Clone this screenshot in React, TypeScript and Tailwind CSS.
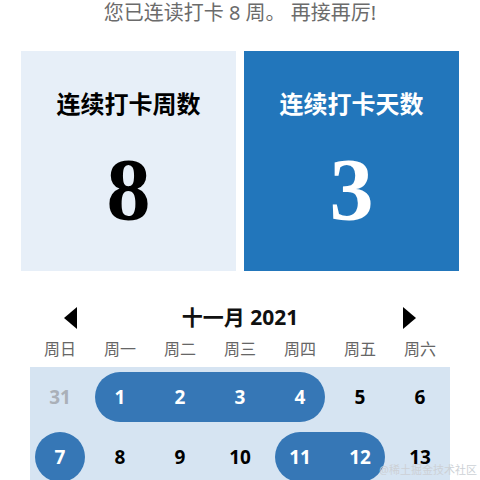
import React from 'react';

const weekNames = ['周日', '周一', '周二', '周三', '周四', '周五', '周六'];

// each row: list of day cells, with range markers for the pill background
type Cell = { d: number; muted?: boolean; start?: boolean; end?: boolean; inRange?: boolean };

const rows: Cell[][] = [
  [
    { d: 31, muted: true },
    { d: 1, inRange: true, start: true },
    { d: 2, inRange: true },
    { d: 3, inRange: true },
    { d: 4, inRange: true, end: true },
    { d: 5 },
    { d: 6 },
  ],
  [
    { d: 7, inRange: true, start: true, end: true },
    { d: 8 },
    { d: 9 },
    { d: 10 },
    { d: 11, inRange: true, start: true },
    { d: 12, inRange: true, end: true },
    { d: 13 },
  ],
];

const cjk = { fontFamily: '"Noto Sans", "Noto Sans CJK SC", sans-serif' };

export default function App() {
  return (
    <div className="relative w-[480px] h-[480px] overflow-hidden bg-white" style={cjk}>
      <p className="text-center text-[20px] leading-[25px] text-[#6b6b6b]">您已连读打卡 8 周。 再接再厉!</p>

      {/* Stat cards */}
      <div className="mt-[26px] flex gap-2 px-[21px]">
        <div className="w-[215px] h-[220px] bg-[#e7eff8] flex flex-col items-center pt-[38px]">
          <div className="text-[24px] leading-[30px] font-bold text-black">连续打卡周数</div>
          <div
            className="mt-[21px] text-[88px] leading-[100px] font-bold text-black"
            style={{ fontFamily: '"Liberation Serif", serif' }}
          >
            8
          </div>
        </div>
        <div className="w-[215px] h-[220px] bg-[#2276bb] flex flex-col items-center pt-[38px]">
          <div className="text-[24px] leading-[30px] font-bold text-white">连续打卡天数</div>
          <div
            className="mt-[21px] text-[88px] leading-[100px] font-bold text-white"
            style={{ fontFamily: '"Liberation Serif", serif' }}
          >
            3
          </div>
        </div>
      </div>

      {/* Calendar */}
      <div className="mt-[32px] px-[30px]">
        <div className="flex items-center justify-between h-[30px] px-[34px]">
          <svg width="13" height="22" viewBox="0 0 13 22">
            <path d="M13 0 L0 11 L13 22 Z" fill="#000" />
          </svg>
          <div className="text-[21px] font-bold text-[#111]">十一月 2021</div>
          <svg width="13" height="22" viewBox="0 0 13 22">
            <path d="M0 0 L13 11 L0 22 Z" fill="#000" />
          </svg>
        </div>
        <div className="grid grid-cols-7 h-[26px] mt-[3px] items-center">
          {weekNames.map((w) => (
            <div key={w} className="text-center text-[16px] leading-[24px] text-[#666]">
              {w}
            </div>
          ))}
        </div>
        <div className="mt-[5px] bg-[#d6e4f2] pb-2">
          {rows.map((row, ri) => (
            <div key={ri} className="grid grid-cols-7 h-[60px]">
              {row.map((c) => (
                <div key={c.d} className="flex items-center h-[60px]">
                  <div
                    className={[
                      'h-[50px] flex items-center justify-center w-full',
                      c.inRange ? 'bg-[#3677b6] text-white' : '',
                      c.start ? 'ml-[5px] rounded-l-full' : '',
                      c.end ? 'mr-[5px] rounded-r-full' : '',
                    ].join(' ')}
                  >
                    <span
                      className={`text-[19px] font-bold ${
                        c.muted ? 'text-[#aab0b8]' : c.inRange ? 'text-white' : 'text-black'
                      }`}
                      style={{
                        marginLeft: c.start ? -5 : 0,
                        marginRight: c.end ? -5 : 0,
                      }}
                    >
                      {c.d}
                    </span>
                  </div>
                </div>
              ))}
            </div>
          ))}
        </div>
      </div>

      <div className="absolute right-[3px] bottom-[3px] text-[11px] leading-[14px] text-[#cdd1d6]">@稀土掘金技术社区</div>
    </div>
  );
}
